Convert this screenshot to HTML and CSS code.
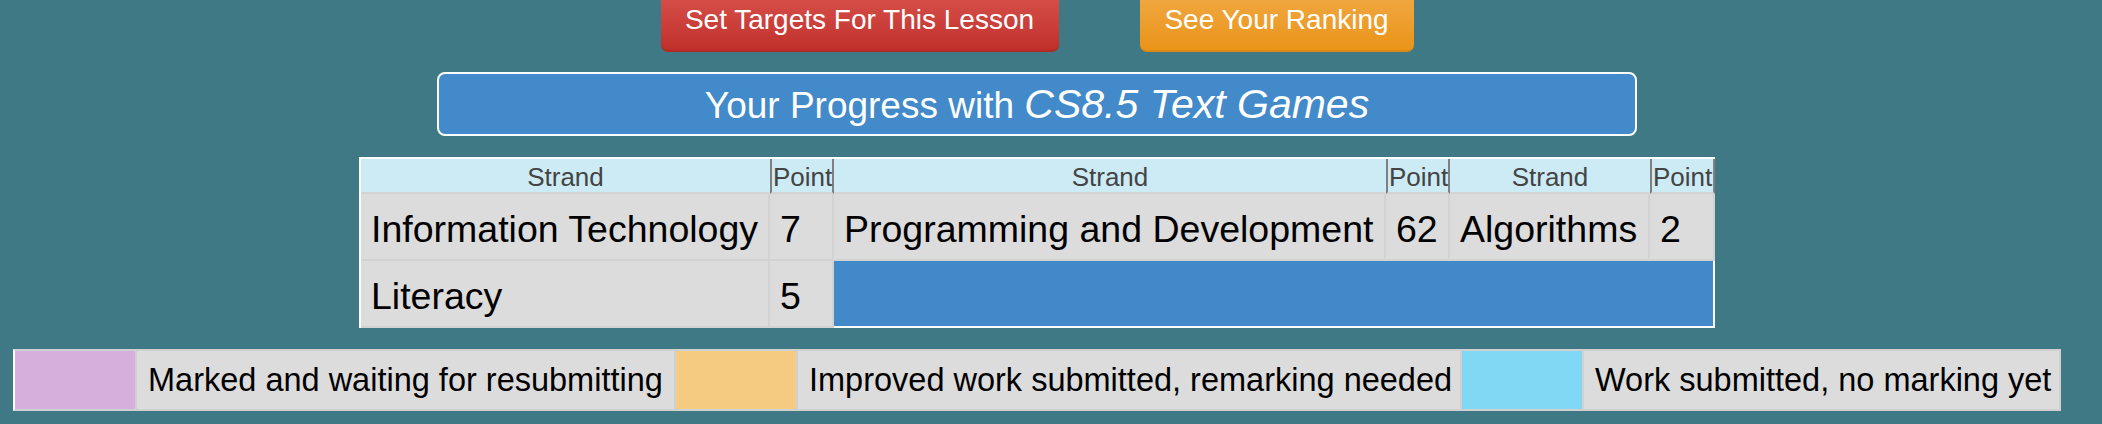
FILE: index.html
```html
<!DOCTYPE html>
<html>
<head>
<meta charset="utf-8">
<link rel="stylesheet" href="styles.css">
</head>
<body>
<div class="page">
  <div class="actions">
    <a class="btn btn-red">Set Targets For This Lesson</a>
    <a class="btn btn-orange">See Your Ranking</a>
  </div>
  <div class="title">Your Progress with <em>CS8.5 Text Games</em></div>
  <table class="progress">
    <colgroup>
      <col class="c-strand1"><col class="c-point"><col class="c-strand2"><col class="c-point"><col class="c-strand3"><col class="c-point-last">
    </colgroup>
    <thead>
      <tr>
        <th>Strand</th><th class="pt">Point</th><th>Strand</th><th class="pt">Point</th><th>Strand</th><th class="pt">Point</th>
      </tr>
    </thead>
    <tbody>
      <tr>
        <td>Information Technology</td><td>7</td><td>Programming and Development</td><td>62</td><td>Algorithms</td><td>2</td>
      </tr>
      <tr>
        <td>Literacy</td><td>5</td><td class="filler" colspan="4"></td>
      </tr>
    </tbody>
  </table>
  <div class="legend">
    <div class="swatch purple"></div>
    <div class="label l1">Marked and waiting for resubmitting</div>
    <div class="swatch orange"></div>
    <div class="label l2">Improved work submitted, remarking needed</div>
    <div class="swatch blue"></div>
    <div class="label l3">Work submitted, no marking yet</div>
  </div>
</div>
</body>
</html>
```
FILE: styles.css
```css
html, body {
  margin: 0;
  padding: 0;
  background: #3f7985;
  font-family: "Liberation Sans", Arial, sans-serif;
  overflow: hidden;
}
.page {
  width: 2074px;
  display: flex;
  flex-direction: column;
  align-items: center;
}
.actions {
  display: flex;
  gap: 81px;
  margin-top: -14px;
}
.btn {
  display: block;
  box-sizing: border-box;
  height: 66px;
  padding-top: 4px;
  line-height: 60px;
  font-size: 28px;
  color: #fff;
  text-align: center;
  border-radius: 7px;
  text-decoration: none;
}
.btn-red {
  width: 398px;
  background: linear-gradient(#db5550, #c0302b);
  border-bottom: 2px solid #b02a26;
}
.btn-orange {
  width: 274px;
  background: linear-gradient(#f1ab48, #ea9419);
  border-bottom: 2px solid #dc8a14;
}
.title {
  box-sizing: border-box;
  width: 1200px;
  height: 64px;
  margin-top: 20px;
  border: 2px solid #fff;
  border-radius: 8px;
  background: #428aca;
  color: #fff;
  font-size: 37px;
  text-align: center;
  padding-top: 1px;
  line-height: 58px;
}
.title em {
  font-style: italic;
  font-size: 41px;
}
.progress {
  margin-top: 21px;
  width: 1356px;
  table-layout: fixed;
  border-collapse: separate;
  border-spacing: 0;
  border-top: 2px solid #fff;
  border-left: 2px solid #fff;
}
.c-strand1 { width: 409px; }
.c-point { width: 64px; }
.c-strand2 { width: 552px; }
.c-strand3 { width: 200px; }
.c-point-last { width: 65px; }
.progress th {
  background: #cdebf5;
  color: #444;
  font-weight: normal;
  font-size: 26px;
  line-height: 30px;
  padding: 3px 0 0;
  text-align: center;
  border-bottom: 2px solid #d3d3d3;
  white-space: nowrap;
  overflow: visible;
}
.progress th.pt {
  text-align: left;
  padding-left: 1px;
  border-left: 2px solid #808080;
  border-right: 2px solid #808080;
}
.progress td {
  background: #dcdcdc;
  color: #000;
  font-size: 37.5px;
  line-height: 42px;
  padding: 14px 10px 9px;
  border-right: 2px solid #d2d2d2;
  border-bottom: 2px solid #d2d2d2;
  white-space: nowrap;
}
.progress td.filler {
  background: #4189c9;
  border-right: 2px solid #fff;
  border-bottom: 2px solid #fff;
}
.legend {
  margin-top: 21px;
  width: 2048px;
  box-sizing: border-box;
  height: 62px;
  display: flex;
  background: #dcdcdc;
  border: 2px solid #d0d0d0;
  border-left: 2px solid #fff;
}
.swatch {
  width: 120px;
  flex: none;
}
.purple { background: #d7afdd; }
.orange { background: #f5cb81; }
.blue { background: #80d8f5; }
.label {
  box-sizing: border-box;
  font-size: 32.5px;
  color: #000;
  padding: 0 0 0 11px;
  line-height: 58px;
  white-space: nowrap;
  border-left: 2px solid #d0d0d0;
  border-right: 2px solid #d0d0d0;
}
.l1 { width: 541px; }
.l2 { width: 666px; }
.l3 { flex: 1; border-right: none; }
```
